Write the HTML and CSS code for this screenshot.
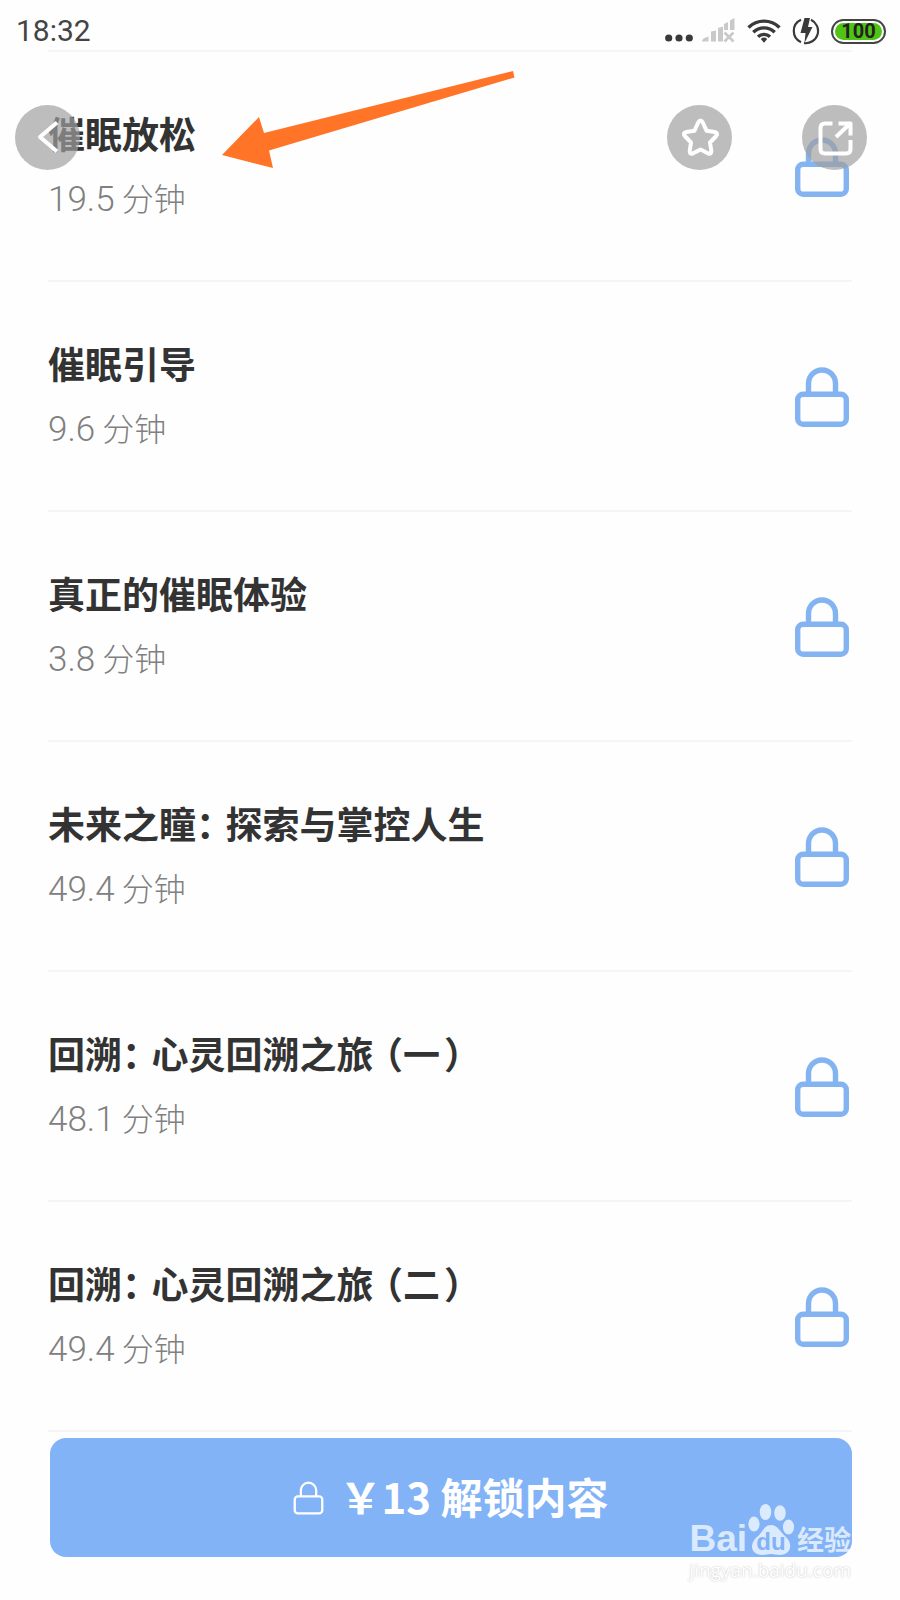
FILE: index.html
```html
<!DOCTYPE html>
<html lang="zh-CN">
<head>
<meta charset="utf-8">
<meta name="viewport" content="width=device-width, initial-scale=1">
<title>催眠放松</title>
<link rel="stylesheet" href="styles.css">
</head>
<body>
<svg class="defs" aria-hidden="true">
  <symbol id="lock" viewBox="0 0 54 60">
    <rect x="2.7" y="27.2" width="48.6" height="30" rx="5.5"/>
    <path d="M13.5 27V16.5a13.5 13.5 0 0 1 27 0V27"/>
  </symbol>
</svg>
<div class="screen">
  <header class="status">
    <time class="clock">18:32</time>
    <div class="indicators">
      <svg width="28" height="26" viewBox="0 0 28 26" fill="#3a3a3a"><circle cx="3.7" cy="20" r="3.6"/><circle cx="14" cy="20" r="3.6"/><circle cx="24.3" cy="20" r="3.6"/></svg>
      <svg class="signal" width="33" height="26" viewBox="0 0 33 26" fill="#c9c9c9"><path d="M0 23.500q0-3.500 6.500-5v5zM9 13.500l5-1v11H9zM16 10l5-1.500v15h-5zM22 6l4-2v8h-4zM28 2.500L32.500 0v12H28z"/><path d="M22.500 14.500l9 9M31.500 14.500l-9 9" stroke="#c9c9c9" stroke-width="2.600"/></svg>
      <svg class="wifi" width="34" height="26" viewBox="0 0 34 26" fill="none" stroke="#3a3a3a" stroke-width="3.400"><path d="M1.500 9.500a22 22 0 0 1 31 0M6.300 14.200a15.300 15.300 0 0 1 21.400 0M11 18.800a8.600 8.600 0 0 1 12 0"/><path d="M13.800 21a4.800 4.800 0 0 1 6.400 0L17 24.800z" fill="#3a3a3a" stroke="none"/></svg>
      <svg class="charge" width="28" height="28" viewBox="0 0 28 28"><path d="M9 25.200A12.300 12.300 0 0 1 9 2.800M19 2.800a12.300 12.300 0 0 1-7 23.300" fill="none" stroke="#3a3a3a" stroke-width="2.200"/><path d="M12.500 1h5.500l-2 9h4.500L12.500 26l1-10H8.500z" fill="#3a3a3a"/></svg>
      <span class="battery"><span class="level">100</span></span>
    </div>
  </header>

  <nav class="tools">
    <button class="round" aria-label="返回"><svg width="65" height="65" viewBox="0 0 65 65"><path d="M42 17.500L25 32l17 14.500"/></svg></button>
    <div class="actions">
      <button class="round" aria-label="收藏"><svg width="65" height="65" viewBox="0 0 65 65"><path d="M31.200 17.500q2.300-4 4.600 0l3.800 8.300 8 1.200q4 .8 1.600 4l-6.200 6.500 1.300 8.500q.3 3.600-3 2.500l-7.800-4-7.800 4q-3.300 1.100-3-2.500l1.300-8.500-6.200-6.500q-2.400-3.200 1.600-4l8-1.200z"/></svg></button>
      <button class="round" aria-label="分享"><svg width="65" height="65" viewBox="0 0 65 65"><path d="M30.500 18.500H23q-4.500 0-4.500 4.500v21q0 4.500 4.500 4.500h21q4.500 0 4.500-4.500v-9M34 32l14-13.500M36.500 18.500h12v12"/></svg></button>
    </div>
  </nav>

  <main class="content">
    <ul class="list">
      <li class="item"><div class="info"><h2>催眠放松</h2><p><span class="num">19.5</span> 分钟</p></div><svg class="lock"><use href="#lock"/></svg></li>
      <li class="item"><div class="info"><h2>催眠引导</h2><p><span class="num">9.6</span> 分钟</p></div><svg class="lock"><use href="#lock"/></svg></li>
      <li class="item"><div class="info"><h2>真正的催眠体验</h2><p><span class="num">3.8</span> 分钟</p></div><svg class="lock"><use href="#lock"/></svg></li>
      <li class="item"><div class="info"><h2>未来之瞳<span class="colon">：</span>探索与掌控人生</h2><p><span class="num">49.4</span> 分钟</p></div><svg class="lock"><use href="#lock"/></svg></li>
      <li class="item"><div class="info"><h2>回溯<span class="colon">：</span>心灵回溯之旅<span class="opening">（</span>一<span class="closing">）</span></h2><p><span class="num">48.1</span> 分钟</p></div><svg class="lock"><use href="#lock"/></svg></li>
      <li class="item"><div class="info"><h2>回溯<span class="colon">：</span>心灵回溯之旅<span class="opening">（</span>二<span class="closing">）</span></h2><p><span class="num">49.4</span> 分钟</p></div><svg class="lock"><use href="#lock"/></svg></li>
    </ul>
    <button class="unlock"><svg class="lock small"><use href="#lock"/></svg><span class="label">￥13 解锁内容</span></button>
  </main>

  <svg class="arrow" width="294" height="98" viewBox="0 0 294 98" aria-hidden="true"><path d="M0 84L37 46l5 16L291 0l1.500 6.500L47 79.500l4 17.500z" fill="#ff7426"/></svg>

  <div class="watermark">
    <div class="brand">
      <span class="bai">Bai</span>
      <span class="paw"><svg width="48" height="54" viewBox="0 0 48 54"><ellipse cx="7" cy="21" rx="5.600" ry="7.600"/><ellipse cx="18.500" cy="9" rx="5.800" ry="8"/><ellipse cx="33" cy="10" rx="5.800" ry="7.800"/><ellipse cx="41.500" cy="24" rx="5.600" ry="7.600"/><path d="M24 22c-7 0-8 7-14 12-9 8-5 18 5 18 4 0 6-1 9-1s5 1 9 1c10 0 14-10 6-18-6-5-8-12-15-12z"/></svg><b>du</b></span>
      <span class="jing">经验</span>
    </div>
    <div class="url">jingyan.baidu.com</div>
  </div>
</div>
</body>
</html>
```
FILE: styles.css
```css
* { box-sizing: border-box; }
body {
  margin: 0;
  background: #fefefe;
  color: #333;
  font-family: "Noto Sans CJK SC", sans-serif;
}
h2, p, ul { margin: 0; padding: 0; }
button { border: 0; padding: 0; font-family: inherit; cursor: pointer; }
.defs { display: none; }
.screen { position: relative; min-height: 100vh; }

.status {
  display: flex;
  justify-content: space-between;
  align-items: center;
  height: 50px;
  padding: 12px 14px 0 16px;
}
.clock { font: 400 30px/36px Roboto, sans-serif; color: #444; }
.indicators { display: flex; align-items: center; }
.signal { margin-left: 9px; }
.wifi { margin-left: 12px; }
.charge { margin-left: 11px; }
.battery {
  margin-left: 11px;
  padding: 2px;
  border: 2px solid #444;
  border-radius: 13px;
}
.level {
  display: block;
  width: 47px;
  height: 17px;
  border-radius: 9px;
  background: #4fc414;
  color: #222;
  font: 700 20px/17px Roboto, sans-serif;
  text-align: center;
}

.tools {
  position: absolute;
  z-index: 2;
  top: 105px;
  left: 15px;
  right: 33px;
  display: flex;
  justify-content: space-between;
}
.actions { display: flex; gap: 70px; }
.round {
  width: 65px;
  height: 65px;
  border-radius: 50%;
  background: rgba(159, 159, 159, 0.69);
}
.round svg {
  display: block;
  fill: none;
  stroke: #fff;
  stroke-width: 4;
  stroke-linejoin: round;
}

.content { padding: 0 48px 43px; }
.list { list-style: none; border-top: 2px solid #f5f5f5; }
.item {
  display: flex;
  align-items: center;
  justify-content: space-between;
  min-height: 230px;
  padding: 2px 3px 0 0;
  border-bottom: 2px solid #f5f5f5;
}
.info { display: flex; flex-direction: column; gap: 14px; padding-bottom: 4px; }
.info h2 { font-size: 37px; line-height: 52px; font-weight: 700; }
.info p { font-size: 32px; line-height: 48px; font-weight: 300; color: #808080; }
.num { font-family: Roboto, sans-serif; font-size: 35px; line-height: 48px; }
.colon, .opening, .closing { font-feature-settings: "halt"; }
.colon { margin-right: 11px; }
.opening { margin-left: 11px; }
.closing { margin-left: 4px; }
.lock {
  width: 54px;
  height: 60px;
  fill: none;
  stroke: #84b3f1;
  stroke-width: 5.4;
}
.unlock {
  display: flex;
  align-items: center;
  justify-content: center;
  gap: 15px;
  width: calc(100% - 2px);
  height: 119px;
  margin: 6px 0 0 2px;
  border-radius: 16px;
  background: #82b3f7;
  color: #fff;
  font-size: 42px;
  line-height: 60px;
  font-weight: 700;
}
.label { padding-bottom: 4px; }
.lock.small { width: 31px; height: 34px; stroke: #fff; stroke-width: 4; }

.arrow { position: absolute; z-index: 3; left: 222px; top: 71px; }

.watermark {
  position: absolute;
  z-index: 3;
  right: 49px;
  bottom: 17px;
  color: rgba(255, 255, 255, 0.72);
}
.brand { display: flex; align-items: flex-end; justify-content: flex-end; height: 54px; }
.bai { font: 700 37px/36px "Liberation Sans", sans-serif; }
.paw { position: relative; height: 54px; }
.paw svg { display: block; fill: currentColor; }
.paw b {
  position: absolute;
  inset: 26px 0 0;
  color: #82b3f7;
  font: 700 24px/26px "Liberation Sans", sans-serif;
  text-align: center;
}
.jing { margin-left: 2px; font-size: 27px; line-height: 36px; font-weight: 700; }
.url {
  color: #fff;
  font: 400 19px/26px "Open Sans", sans-serif;
  text-shadow: 0 0 2px #bbb;
}
```
